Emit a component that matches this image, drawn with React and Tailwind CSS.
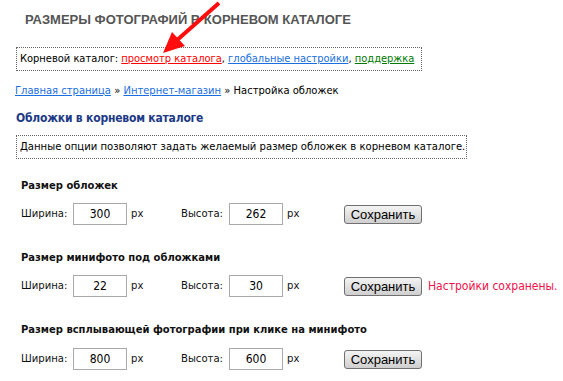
import React from "react";

const body = { fontFamily: '"DejaVu Sans Condensed", "DejaVu Sans", Tahoma, sans-serif' };

function SizeRow({ w, h, saved }) {
  return (
    <div className="flex items-center h-[22px] text-[11.2px] text-[#111] whitespace-nowrap">
      <span className="w-[52px] shrink-0">Ширина:</span>
      <input
        readOnly
        value={w}
        className="w-[54px] h-[22px] shrink-0 border border-[#a9a9a9] bg-white text-center text-[12px] text-black outline-none"
      />
      <span className="ml-[4px] w-[50px] shrink-0">px</span>
      <span className="w-[48px] shrink-0">Высота:</span>
      <input
        readOnly
        value={h}
        className="w-[54px] h-[22px] shrink-0 border border-[#a9a9a9] bg-white text-center text-[12px] text-black outline-none"
      />
      <span className="ml-[4px] w-[57px] shrink-0">px</span>
      <button
        className="w-[78px] h-[19px] shrink-0 rounded-[3px] border border-[#707070] bg-gradient-to-b from-[#f4f4f4] to-[#cfcfcf] text-[13px] leading-none text-black"
        style={{ fontFamily: '"Liberation Sans", Arial, sans-serif' }}
      >
        Сохранить
      </button>
      {saved && (
        <span className="ml-[6px] text-[12px] text-[#f0124a]">Настройки сохранены.</span>
      )}
    </div>
  );
}

export default function App() {
  return (
    <div className="relative w-[563px] h-[381px] bg-white overflow-hidden" style={body}>
      <div className="pl-[16px] pt-[12px]">
        <h1
          className="ml-[9px] text-[13px] font-bold text-[#555] leading-[16px]"
          style={{ fontFamily: '"Liberation Sans", Arial, sans-serif' }}
        >
          РАЗМЕРЫ ФОТОГРАФИЙ В КОРНЕВОМ КАТАЛОГЕ
        </h1>

        <div className="mt-[19px] w-[406px] h-[24px] border border-dotted border-[#666] px-[3px] leading-[22px] whitespace-nowrap text-[11px] text-black">
          Корневой каталог: <a className="text-[#ff0000] underline">просмотр каталога</a>,{" "}
          <a className="text-[#1a6fe0] underline">глобальные настройки</a>,{" "}
          <a className="text-[#007a00] underline">поддержка</a>
        </div>

        <div className="mt-[12px] text-[11.1px] text-black h-[16px] leading-[16px] -ml-[1px] whitespace-nowrap">
          <a className="text-[#1a6fe0] underline">Главная страница</a> »{" "}
          <a className="text-[#1a6fe0] underline">Интернет-магазин</a> » Настройка обложек
        </div>

        <h2 className="mt-[10px] text-[12px] font-bold tracking-[-0.2px] text-[#1c3a86] leading-[18px] whitespace-nowrap">
          Обложки в корневом каталоге
        </h2>

        <div className="mt-[8px] w-[451px] h-[24px] border border-dotted border-[#666] px-[3px] leading-[22px] whitespace-nowrap text-[11.2px] text-black">
          Данные опции позволяют задать желаемый размер обложек в корневом каталоге.
        </div>

        <div className="ml-[5px]">
          <div className="mt-[19px] text-[11.1px] font-bold text-[#111] leading-[16px]">Размер обложек</div>
          <div className="mt-[9px]">
            <SizeRow w="300" h="262" />
          </div>

          <div className="mt-[25px] text-[11.1px] font-bold text-[#111] leading-[16px]">
            Размер минифото под обложками
          </div>
          <div className="mt-[9px]">
            <SizeRow w="22" h="30" saved />
          </div>

          <div className="mt-[25px] text-[11.1px] font-bold text-[#111] leading-[16px]">
            Размер всплывающей фотографии при клике на минифото
          </div>
          <div className="mt-[10px]">
            <SizeRow w="800" h="600" />
          </div>
        </div>
      </div>

      <svg className="absolute left-0 top-0" width="563" height="381" viewBox="0 0 563 381">
        <line x1="219" y1="3" x2="176" y2="41" stroke="#ff0d0d" strokeWidth="4" />
        <polygon points="163,53 172,32 185,46" fill="#ff0d0d" />
      </svg>
    </div>
  );
}
